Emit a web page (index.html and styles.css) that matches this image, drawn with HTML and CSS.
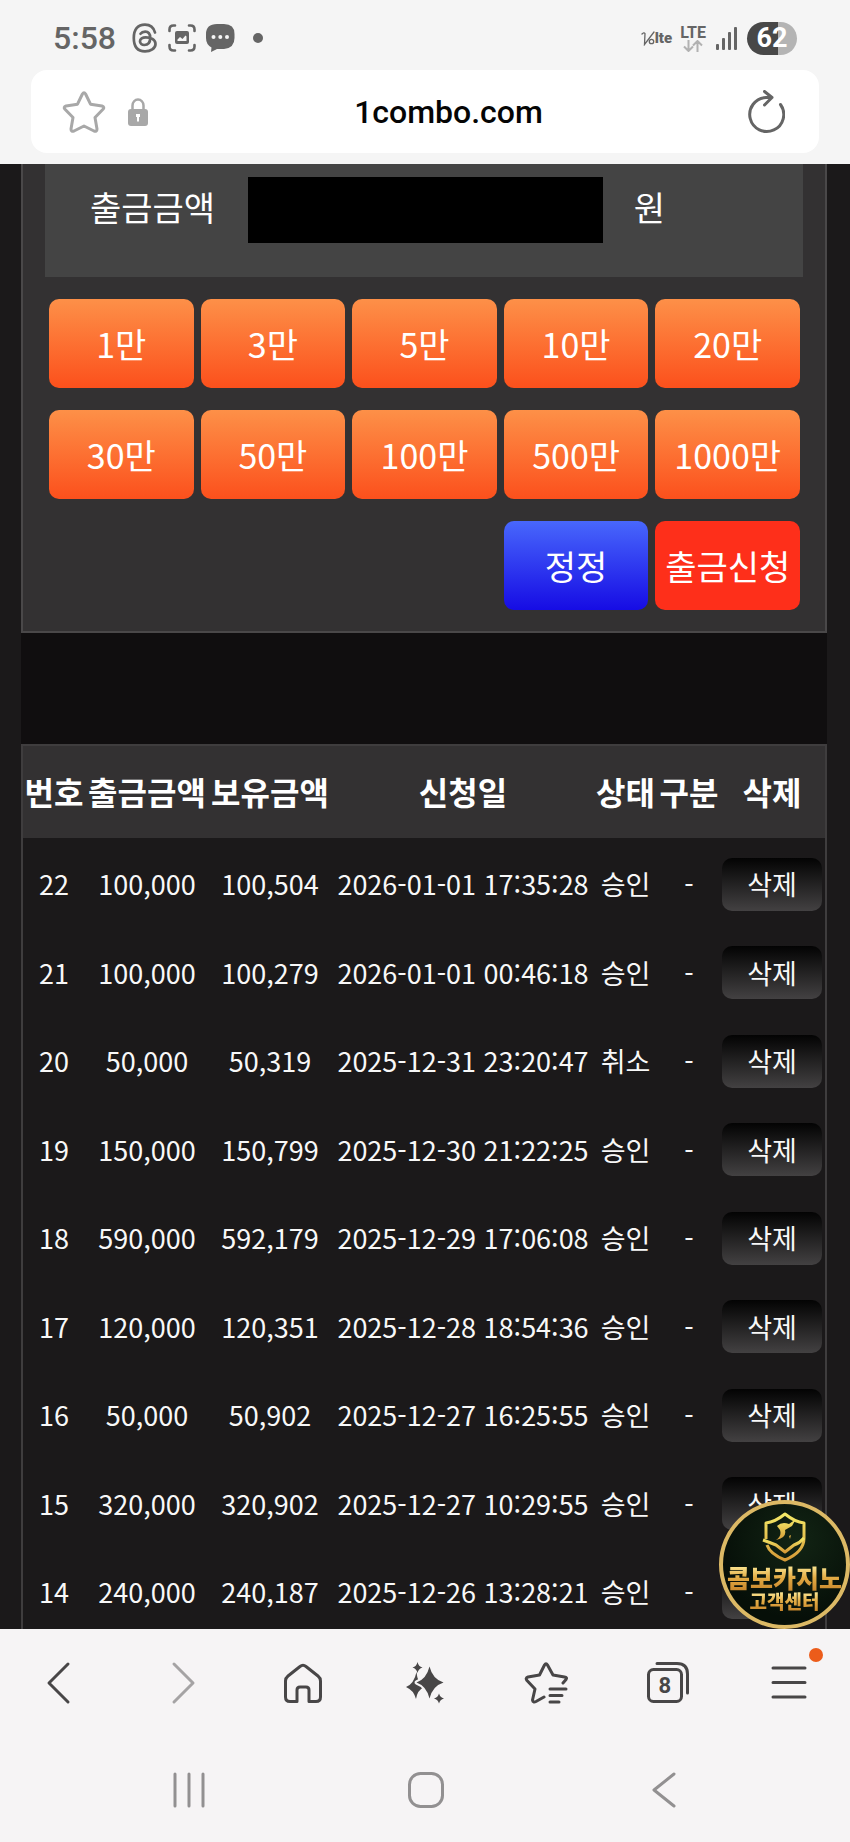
FILE: index.html
```html
<!DOCTYPE html>
<html lang="ko">
<head>
<meta charset="utf-8">
<meta name="viewport" content="width=device-width, initial-scale=1">
<title>1combo.com</title>
<link rel="stylesheet" href="styles.css">
</head>
<body>
<header class="top">
  <div class="status">
    <div class="status-side">
      <span class="time">5:58</span>
      <svg class="ic-threads" width="26" height="30" viewBox="0 0 26 30" fill="none" stroke="#656565" stroke-width="2.7" stroke-linecap="round"><path d="M23 9.500C21.700 4.500 18.500 1.600 13 1.600C5.500 1.600 1.800 6.600 1.800 15S5.500 28.400 13 28.400C18.500 28.400 23.500 25.500 23.500 21C23.500 16.500 18.500 14.300 13.800 14.300C10.500 14.300 8 15.800 8 18.300C8 20.600 9.900 22 12.300 22C16 22 18.200 19.500 18.200 15C18.200 10.800 16.500 8.700 13.200 8.700C11 8.700 9.500 9.500 8.500 10.800"/></svg>
      <svg class="ic-capture" width="28" height="28" viewBox="0 0 28 28" fill="none" stroke="#656565" stroke-width="2.600" stroke-linecap="round"><path d="M1.500 7V5.500Q1.500 1.500 5.500 1.500H7M21 1.500H22.500Q26.500 1.500 26.500 5.500V7M26.500 21V22.500Q26.500 26.500 22.500 26.500H21M7 26.500H5.500Q1.500 26.500 1.500 22.500V21"/><rect x="7" y="7" width="14" height="13" rx="2" fill="#656565" stroke="none"/><path d="M9.500 17V15.500L12 13L14.500 15L17.500 11.500L18.500 12.500V17Z" fill="#f5f5f5" stroke="none"/></svg>
      <svg class="ic-chat" width="29" height="28" viewBox="0 0 29 28"><path d="M11 0H18Q28.500 0 28.500 10V14Q28.500 24 18 25H11L5 28L5.500 23.500Q0 20.500 0 14V10Q0 0 11 0Z" fill="#656565"/><g fill="#f5f5f5"><circle cx="7.500" cy="13" r="2"/><circle cx="14.300" cy="13" r="2"/><circle cx="21" cy="13" r="2"/></g></svg>
      <svg class="ic-dot" width="10" height="10" viewBox="0 0 10 10"><circle cx="5" cy="5" r="5" fill="#656565"/></svg>
    </div>
    <div class="status-side">
      <span class="volte"><svg width="14" height="15" viewBox="0 0 14 15" fill="none" stroke="#656565" stroke-width="1.300" stroke-linecap="round"><path d="M1 3Q3 1 4 2.500L3.500 13.500L13 1"/><circle cx="10.500" cy="10.500" r="2.200"/></svg><b>lte</b></span>
      <span class="lte">LTE
        <svg width="20" height="12" viewBox="0 0 20 12" fill="none" stroke="#b2b2b2" stroke-width="2"><path d="M5.500 0V11M1 6.500L5.500 11L10 6.500M14.500 12V1M10 5.500L14.500 1L19 5.500"/></svg>
      </span>
      <svg class="ic-signal" width="22" height="23" viewBox="0 0 22 23" fill="#656565"><rect x="0" y="17" width="3" height="6" rx="1"/><rect x="6" y="11" width="3" height="12" rx="1"/><rect x="12" y="5" width="3" height="18" rx="1"/><rect x="18" y="0" width="3" height="23" rx="1"/></svg>
      <span class="battery">62</span>
    </div>
  </div>
  <div class="url">
    <button class="icon-btn" aria-label="북마크"><svg width="44" height="44" viewBox="0 0 44 44" fill="none" stroke="#a8a8a8" stroke-width="3" stroke-linejoin="round"><path d="M20.400 4Q22 1.500 23.600 4L28.500 14.200L40 16Q43 17 41 19.300L33 27.500L35 39Q35 42 32 41L22 36L12 41Q9 42 9 39L11 27.500L3 19.300Q1 17 4 16L15.500 14.200Z"/></svg></button>
    <svg class="ic-lock" width="20" height="28" viewBox="0 0 20 28"><path d="M4.500 13V7.500A5.500 6 0 0 1 15.500 7.500V13" fill="none" stroke="#a8a8a8" stroke-width="2.500"/><rect y="11" width="20" height="17" rx="3" fill="#a8a8a8"/><path d="M8 16H12V19H11V23.500H9V19H8Z" fill="#fff"/></svg>
    <span class="domain">1combo.com</span>
    <button class="icon-btn" aria-label="새로고침"><svg width="38" height="44" viewBox="0 0 38 44" fill="none" stroke="#656565" stroke-width="3" stroke-linecap="round" stroke-linejoin="round"><path d="M33.500 14.500A17 17 0 1 1 19 7.500H24M17.500 1.500L25 7.500L17.500 15"/></svg></button>
  </div>
</header>

<div class="page">
<main class="content">
  <form class="panel">
    <div class="amount">
      <label for="amount">출금금액</label>
      <input id="amount" type="text">
      <span>원</span>
    </div>
    <div class="keys">
      <button type="button">1만</button><button type="button">3만</button><button type="button">5만</button><button type="button">10만</button><button type="button">20만</button>
      <button type="button">30만</button><button type="button">50만</button><button type="button">100만</button><button type="button">500만</button><button type="button">1000만</button>
      <button type="reset" class="reset">정정</button><button type="button" class="submit">출금신청</button>
    </div>
  </form>
  <div class="divider"></div>
  <table class="history">
    <colgroup><col class="c-no"><col class="c-amt"><col class="c-bal"><col class="c-date"><col class="c-state"><col class="c-kind"><col class="c-del"></colgroup>
    <thead><tr><th>번호</th><th>출금금액</th><th>보유금액</th><th>신청일</th><th>상태</th><th>구분</th><th>삭제</th></tr></thead>
    <tbody>
      <tr><td>22</td><td>100,000</td><td>100,504</td><td>2026-01-01 17:35:28</td><td>승인</td><td>-</td><td><button>삭제</button></td></tr>
      <tr><td>21</td><td>100,000</td><td>100,279</td><td>2026-01-01 00:46:18</td><td>승인</td><td>-</td><td><button>삭제</button></td></tr>
      <tr><td>20</td><td>50,000</td><td>50,319</td><td>2025-12-31 23:20:47</td><td>취소</td><td>-</td><td><button>삭제</button></td></tr>
      <tr><td>19</td><td>150,000</td><td>150,799</td><td>2025-12-30 21:22:25</td><td>승인</td><td>-</td><td><button>삭제</button></td></tr>
      <tr><td>18</td><td>590,000</td><td>592,179</td><td>2025-12-29 17:06:08</td><td>승인</td><td>-</td><td><button>삭제</button></td></tr>
      <tr><td>17</td><td>120,000</td><td>120,351</td><td>2025-12-28 18:54:36</td><td>승인</td><td>-</td><td><button>삭제</button></td></tr>
      <tr><td>16</td><td>50,000</td><td>50,902</td><td>2025-12-27 16:25:55</td><td>승인</td><td>-</td><td><button>삭제</button></td></tr>
      <tr><td>15</td><td>320,000</td><td>320,902</td><td>2025-12-27 10:29:55</td><td>승인</td><td>-</td><td><button>삭제</button></td></tr>
      <tr><td>14</td><td>240,000</td><td>240,187</td><td>2025-12-26 13:28:21</td><td>승인</td><td>-</td><td><button>삭제</button></td></tr>
    </tbody>
  </table>
</main>
<button class="support">
  <svg width="48" height="50" viewBox="0 0 48 50" fill="none" stroke="url(#gold)" stroke-linejoin="round"><defs><linearGradient id="gold" x1="0" y1="0" x2="0" y2="1"><stop offset="0" stop-color="#f4e967"/><stop offset="1" stop-color="#d69b38"/></linearGradient></defs><path stroke-width="3" d="M5 27V11Q14 10 24 2Q34 10 43 11V26Q43 40 24 48Q9 42 6 33"/><path stroke-width="3" d="M2 28Q10 31 15 33L24 40L33 33Q39 31 43 26"/><path fill="url(#gold)" stroke="none" d="M16 14Q21 9 28 12L35 7L31 14L24 18Q26 26 15 28Q21 24 19 18ZM28 24L30 23L29 27Z"/></svg>
  <span class="brand">콤보카지노</span>
  <span class="desk">고객센터</span>
</button>
</div>

<footer>
  <nav class="toolbar">
    <button aria-label="뒤로"><svg width="44" height="44" viewBox="0 0 44 44" stroke="#484647"><path d="M29 3L10 22L29 41"/></svg></button>
    <button aria-label="앞으로"><svg width="44" height="44" viewBox="0 0 44 44" stroke="#a5a3a4"><path d="M14 3L33 22L14 41"/></svg></button>
    <button aria-label="홈"><svg width="44" height="44" viewBox="0 0 44 44" stroke="#484647"><path d="M18 5.500Q21 3 24 5.500L36 15Q38.500 17 38.500 20V36Q38.500 40.500 34 40.500H27V29Q27 26 24 26H18Q15 26 15 29V40.500H8Q3.500 40.500 3.500 36V20Q3.500 17 6 15Z"/></svg></button>
    <button aria-label="AI"><svg class="solid" width="44" height="44" viewBox="0 0 44 44"><path d="M13.500 11Q14.500 23 21 26Q14.500 29 13 38Q10.500 29 3 26Q11 23 13.500 11Z"/><path class="cut" d="M26.500 5.500Q29.500 18 40.500 21.500Q29.500 25 26.500 37.500Q23.500 25 13.500 21.500Q23.500 18 26.500 5.500Z"/><path d="M14.500 1Q15.500 5.500 19.500 6.500Q15.500 7.500 14.500 12Q13.500 7.500 9.500 6.500Q13.500 5.500 14.500 1ZM36 32.500Q37 36.500 41 37.500Q37 38.500 36 42.500Q35 38.500 31 37.500Q35 36.500 36 32.500Z"/></svg></button>
    <button aria-label="북마크 목록"><svg width="44" height="44" viewBox="0 0 44 44" stroke="#484647"><path d="M39 22L42 18.500Q43.500 16.500 40.500 16L29 14L23.500 4Q22 1.500 20.500 4L15.500 14L4 16Q1 17 3 19.500L11 28L8.500 39Q9 42 12 40.500L20 36M26 28H42M26 34.500H38M26 41H35"/></svg></button>
    <button aria-label="탭 8개"><svg width="44" height="44" viewBox="0 0 44 44" stroke="#484647"><rect x="2.500" y="8.500" width="33" height="32" rx="5"/><path d="M11 2.500H31Q41.500 2.500 41.500 13V32"/></svg><span class="tabs">8</span></button>
    <button aria-label="메뉴"><svg width="44" height="44" viewBox="0 0 44 44" stroke="#484647"><path d="M6 7H38M6 21.500H38M6 36H38"/></svg><span class="alert"></span></button>
  </nav>
  <nav class="system">
    <button aria-label="최근 앱"><svg width="36" height="36" viewBox="0 0 36 36"><path d="M4 2V34M18 2V34M32 2V34"/></svg></button>
    <button aria-label="홈 화면"><svg width="36" height="36" viewBox="0 0 36 36"><rect x="1.500" y="1.500" width="33" height="33" rx="11"/></svg></button>
    <button aria-label="이전"><svg width="36" height="36" viewBox="0 0 36 36"><path d="M28 2L8 18L28 34"/></svg></button>
  </nav>
</footer>
</body>
</html>
```

FILE: styles.css
```css
* { box-sizing: border-box; }
body {
  margin: 0;
  height: 100vh;
  display: flex;
  flex-direction: column;
  background: #1b191a;
  color: #fff;
  font-family: "Noto Sans CJK KR", sans-serif;
}
button { margin: 0; padding: 0; border: 0; background: none; color: inherit; font: inherit; }
svg { display: block; flex: none; }

/* browser header */
.top { flex: none; padding: 0 31px 11px; background: #f5f5f5; color: #656565; }
.status { height: 70px; padding: 6px 22px 0; display: flex; align-items: center; justify-content: space-between; font-family: Roboto, sans-serif; }
.status-side { display: flex; align-items: center; }
.time { font-size: 32px; font-weight: 500; line-height: 32px; }
.ic-threads { margin-left: 16px; }
.ic-capture { margin-left: 10px; }
.ic-chat { margin-left: 10px; }
.ic-dot { margin-left: 18px; }
.volte { font-size: 15px; line-height: 16px; display: flex; align-items: flex-end; }
.volte b { font-weight: 900; }
.lte { margin-left: 8px; display: flex; flex-direction: column; align-items: center; font-size: 16px; line-height: 15px; font-weight: 700; }
.ic-signal { margin: 0 9px 0 10px; }
.battery { width: 50px; height: 33px; border-radius: 17px; background: linear-gradient(90deg, #484848 62%, #b4b4b4 62%); color: #fff; font-size: 27px; font-weight: 700; line-height: 33px; text-align: center; }
.url { height: 83px; padding: 0 34px 0 31px; display: grid; grid-template-columns: 44px 44px 1fr 38px; align-items: center; background: #fff; border-radius: 16px; }
.ic-lock { margin-left: 22px; }
.domain { color: #050505; font-family: Roboto, sans-serif; font-size: 32px; font-weight: 500; text-align: center; }

/* site */
.page { position: relative; flex: 1; min-height: 0; background: #1b191a; }
.content { height: 100%; padding: 0 23px 0 21px; overflow-y: auto; scrollbar-width: none; }
.panel { padding: 0 22px 21px; background: #333132; border: 2px solid #4a4849; border-top: 0; }
.amount { height: 113px; padding: 13px 45px 0; display: flex; align-items: flex-start; background: #444; font-size: 34px; line-height: 60px; }
.amount input { flex: 1; min-width: 0; height: 66px; margin: 0 31px 0 33px; border: 0; background: #000; color: #fff; font: inherit; }
.amount span { margin-right: 93px; }
.keys { padding: 22px 3px 0 4px; display: grid; grid-template-columns: repeat(5, 1fr); gap: 22px 7px; }
.keys button { height: 89px; border-radius: 10px; background: linear-gradient(#fd9048, #fc501c); font-size: 34px; line-height: 34px; white-space: nowrap; }
.keys .reset { grid-column: 4; background: linear-gradient(#4867fc, #160ce4); }
.keys .submit { background: #fe2f1a; }
.divider { height: 111px; background: #100e0f; }
.history { width: 100%; border: 2px solid #3f3d3e; border-collapse: separate; border-spacing: 0; table-layout: fixed; text-align: center; white-space: nowrap; }
.c-no { width: 62px; }
.c-amt { width: 124px; }
.c-bal { width: 122px; }
.c-date { width: 264px; }
.c-state { width: 61px; }
.c-kind { width: 66px; }
.c-del { width: 103px; }
.history th { height: 92px; padding: 0 0 2px; background: #333132; font-size: 32px; font-weight: 700; line-height: 40px; }
.history th:last-child, .history td:last-child { padding-right: 3px; }
.history td { height: 88px; padding: 4px 0 0; font-size: 27px; line-height: 40px; color: #f8f8f8; }
.history tr:nth-child(even) td { height: 89px; }
.history td button { display: block; width: 100px; height: 53px; margin: 0 auto; border-radius: 10px; background: linear-gradient(#030303, #434142); }

.support {
  position: absolute; right: 0; bottom: 0; width: 131px; height: 129px;
  display: flex; flex-direction: column; align-items: center; padding-top: 8px;
  border: 4px solid #dcb965; border-radius: 50%;
  background: radial-gradient(circle at 60% 30%, #122414, #060f08 70%);
  font-weight: 900; white-space: nowrap;
}
.brand, .desk { background: linear-gradient(#fff0a0, #e3ac45 50%, #c8862b); background-clip: text; -webkit-background-clip: text; color: transparent; }
.brand { font-size: 25px; line-height: 27px; margin-top: 2px; }
.desk { font-size: 19px; line-height: 20px; }

/* browser footer */
footer { flex: none; background: #f6f4f5; color: #484647; }
footer svg { fill: none; stroke-linecap: round; stroke-linejoin: round; stroke-width: 3; }
footer .solid { fill: #484647; }
.cut { stroke: #f6f4f5; stroke-width: 4; paint-order: stroke; }
.toolbar { height: 108px; display: grid; grid-template-columns: repeat(7, 1fr); }
.toolbar button, .system button { position: relative; display: grid; place-items: center; }
.tabs { position: absolute; font: 700 22px/22px Roboto, sans-serif; margin: 6px 6px 0 0; }
.alert { position: absolute; top: 19px; left: calc(50% + 20px); width: 14px; height: 14px; border-radius: 50%; background: #ec5c1a; }
.system { height: 105px; padding: 0 67px 0 70px; display: grid; grid-template-columns: repeat(3, 1fr); }
.system svg { stroke: #929091; }
```
